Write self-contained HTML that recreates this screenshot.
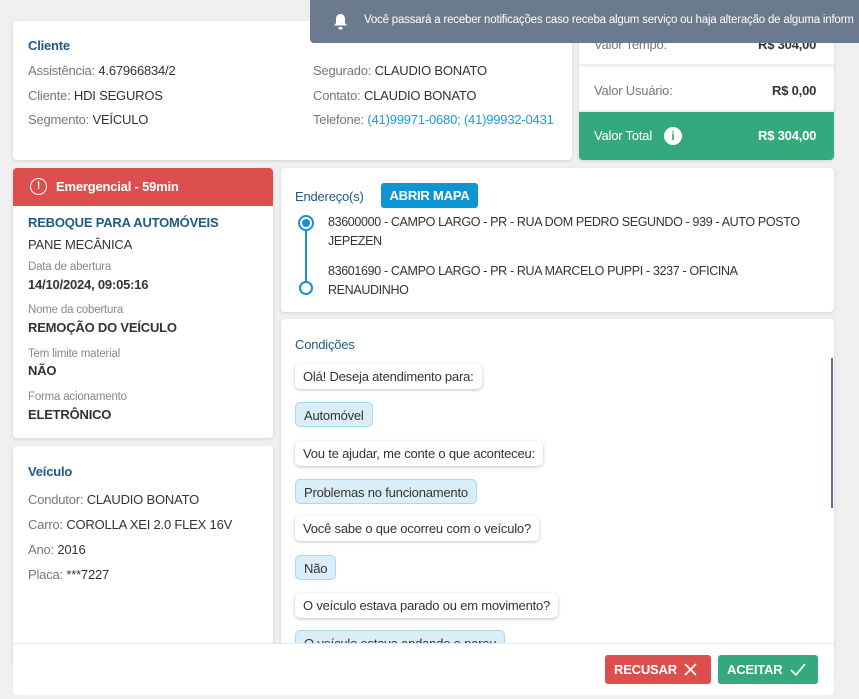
<!DOCTYPE html>
<html><head><meta charset="utf-8"><style>
*{margin:0;padding:0;box-sizing:border-box}
body{width:859px;height:699px;background:#efefef;font-family:"Liberation Sans",sans-serif;font-size:13px;color:#333;position:relative;overflow:hidden;letter-spacing:-0.2px}
.card{position:absolute;background:#fff;border-radius:4px;box-shadow:0 1px 3px rgba(0,0,0,.12)}
.t{position:absolute;white-space:nowrap}
.lbl{color:#777}
.h{color:#1e5a86;font-weight:bold;font-size:13px}
.blue{color:#139fd8}
.sm{font-size:11.5px;color:#888}
.b{font-weight:bold;color:#333}
.bub{position:absolute;left:295px;height:25px;line-height:25px;padding:0 8px;border-radius:5px;background:#fff;box-shadow:0 1px 3px rgba(0,0,0,.25);white-space:nowrap}
.bub.u{background:#d9eef8;border:1px solid #a9d8ef;box-shadow:none}
</style></head><body>

<div class="card" style="left:13px;top:21px;width:559px;height:139px"></div>
<div class="t h" style="left:28px;top:38px">Cliente</div>
<div class="t" style="left:28px;top:63px"><span class="lbl">Assistência:</span> 4.67966834/2</div>
<div class="t" style="left:28px;top:88px"><span class="lbl">Cliente:</span> HDI SEGUROS</div>
<div class="t" style="left:28px;top:112px"><span class="lbl">Segmento:</span> VEÍCULO</div>
<div class="t" style="left:313px;top:63px"><span class="lbl">Segurado:</span> CLAUDIO BONATO</div>
<div class="t" style="left:313px;top:88px"><span class="lbl">Contato:</span> CLAUDIO BONATO</div>
<div class="t" style="left:313px;top:112px"><span class="lbl">Telefone:</span> <span class="blue">(41)99971-0680; (41)99932-0431</span></div>

<div class="card" style="left:579px;top:21px;width:255px;height:139px"></div>
<div class="t lbl" style="left:594px;top:37px">Valor Tempo:</div>
<div class="t b" style="left:758px;top:37px">R$ 304,00</div>
<div style="position:absolute;left:579px;top:64px;width:255px;height:3px;background:#efefef"></div>
<div class="t lbl" style="left:594px;top:83px">Valor Usuário:</div>
<div class="t b" style="left:772px;top:83px">R$ 0,00</div>
<div style="position:absolute;left:579px;top:110px;width:255px;height:2px;background:#efefef"></div>
<div style="position:absolute;left:579px;top:112px;width:255px;height:48px;background:#34aa7c;border-radius:0 0 4px 4px"></div>
<div class="t" style="left:594px;top:128px;color:#fff">Valor Total</div>
<div style="position:absolute;left:664px;top:127px;width:18px;height:18px;border-radius:50%;background:#fff;color:#34aa7c;font-weight:bold;font-size:12px;text-align:center;line-height:18px">i</div>
<div class="t" style="left:758px;top:128px;color:#fff;font-weight:bold">R$ 304,00</div>

<div style="position:absolute;left:310px;top:0;width:549px;height:43px;background:#6b7a8d;border-radius:0 0 0 4px"></div>
<svg style="position:absolute;left:333px;top:13px" width="15" height="17" viewBox="0 0 15 17"><path d="M7.5 1c-3 0-4.5 2.3-4.5 5v4l-2 2.5h13L12 10V6c0-2.7-1.5-5-4.5-5z" fill="#fff"/><rect x="5.5" y="14" width="4" height="2.5" rx="1" fill="#fff"/></svg>
<div class="t" style="left:364px;top:14px;color:#fff;font-size:11.5px">Você passará a receber notificações caso receba algum serviço ou haja alteração de alguma inform</div>

<div class="card" style="left:13px;top:168px;width:260px;height:270px"></div>
<div style="position:absolute;left:13px;top:168px;width:260px;height:38px;background:#dd4f4f;border-radius:4px 4px 0 0"></div>
<div style="position:absolute;left:30px;top:178px;width:17px;height:17px;border:1.5px solid #fff;border-radius:50%;color:#fff;font-size:11px;text-align:center;line-height:14px;font-weight:bold">!</div>
<div class="t" style="left:56px;top:179px;color:#fff;font-weight:bold">Emergencial - 59min</div>
<div class="t h" style="left:28px;top:215px">REBOQUE PARA AUTOMÓVEIS</div>
<div class="t" style="left:28px;top:237px">PANE MECÂNICA</div>
<div class="t sm" style="left:28px;top:261px">Data de abertura</div>
<div class="t b" style="left:28px;top:277px">14/10/2024, 09:05:16</div>
<div class="t sm" style="left:28px;top:304px">Nome da cobertura</div>
<div class="t b" style="left:28px;top:320px">REMOÇÃO DO VEÍCULO</div>
<div class="t sm" style="left:28px;top:348px">Tem limite material</div>
<div class="t b" style="left:28px;top:363px">NÃO</div>
<div class="t sm" style="left:28px;top:391px">Forma acionamento</div>
<div class="t b" style="left:28px;top:407px">ELETRÔNICO</div>

<div class="card" style="left:13px;top:446px;width:260px;height:220px"></div>
<div class="t h" style="left:28px;top:464px">Veículo</div>
<div class="t" style="left:28px;top:492px"><span class="lbl">Condutor:</span> CLAUDIO BONATO</div>
<div class="t" style="left:28px;top:517px"><span class="lbl">Carro:</span> COROLLA XEI 2.0 FLEX 16V</div>
<div class="t" style="left:28px;top:542px"><span class="lbl">Ano:</span> 2016</div>
<div class="t" style="left:28px;top:567px"><span class="lbl">Placa:</span> ***7227</div>

<div class="card" style="left:281px;top:168px;width:553px;height:144px"></div>
<div class="t" style="left:295px;top:189px;color:#1e5a86">Endereço(s)</div>
<div style="position:absolute;left:381px;top:183px;width:97px;height:25px;background:#0e96d4;border-radius:3px;color:#fff;font-weight:bold;text-align:center;line-height:25px">ABRIR MAPA</div>
<div style="position:absolute;left:305px;top:222px;width:2px;height:66px;background:#1a8fd0"></div>
<div style="position:absolute;left:298px;top:215px;width:16px;height:16px;border:2px solid #1a8fd0;border-radius:50%;background:#fff"></div>
<div style="position:absolute;left:302px;top:219px;width:8px;height:8px;border-radius:50%;background:#1a8fd0"></div>
<div style="position:absolute;left:299px;top:281px;width:14px;height:14px;border:2px solid #1a8fd0;border-radius:50%;background:#fff"></div>
<div class="t" style="left:328px;top:213px;line-height:19px;font-size:12.5px;letter-spacing:-0.35px">83600000 - CAMPO LARGO - PR - RUA DOM PEDRO SEGUNDO - 939 - AUTO POSTO<br>JEPEZEN</div>
<div class="t" style="left:328px;top:262px;line-height:19px;font-size:12.5px;letter-spacing:-0.35px">83601690 - CAMPO LARGO - PR - RUA MARCELO PUPPI - 3237 - OFICINA<br>RENAUDINHO</div>

<div class="card" style="left:281px;top:319px;width:553px;height:360px"></div>
<div class="t h" style="left:295px;top:337px;font-weight:normal">Condições</div>
<div style="position:absolute;left:831px;top:358px;width:2px;height:150px;background:#5c6f8a"></div>
<div class="bub" style="top:364px">Olá! Deseja atendimento para:</div>
<div class="bub u" style="top:402px">Automóvel</div>
<div class="bub" style="top:441px">Vou te ajudar, me conte o que aconteceu:</div>
<div class="bub u" style="top:479px">Problemas no funcionamento</div>
<div class="bub" style="top:516px">Você sabe o que ocorreu com o veículo?</div>
<div class="bub u" style="top:555px">Não</div>
<div class="bub" style="top:593px">O veículo estava parado ou em movimento?</div>
<div class="bub u" style="top:630px">O veículo estava andando e parou</div>

<div style="position:absolute;left:13px;top:643px;width:821px;height:52px;background:#fff;border-top:1px solid #e6e6e6;border-radius:0 0 4px 4px"></div>
<div style="position:absolute;left:605px;top:655px;width:106px;height:29px;background:#dd4f4f;border-radius:3px;color:#fff;font-weight:bold;line-height:29px;padding-left:9px">RECUSAR
<svg style="position:absolute;left:79px;top:8px" width="13" height="13"><path d="M1 1L12 12M12 1L1 12" stroke="#fff" stroke-width="1.6"/></svg></div>
<div style="position:absolute;left:718px;top:655px;width:100px;height:29px;background:#34aa7c;border-radius:3px;color:#fff;font-weight:bold;line-height:29px;padding-left:9px">ACEITAR
<svg style="position:absolute;left:72px;top:8px" width="16" height="13"><path d="M1 7L6 12L15 1" stroke="#fff" stroke-width="1.6" fill="none"/></svg></div>
</body></html>
